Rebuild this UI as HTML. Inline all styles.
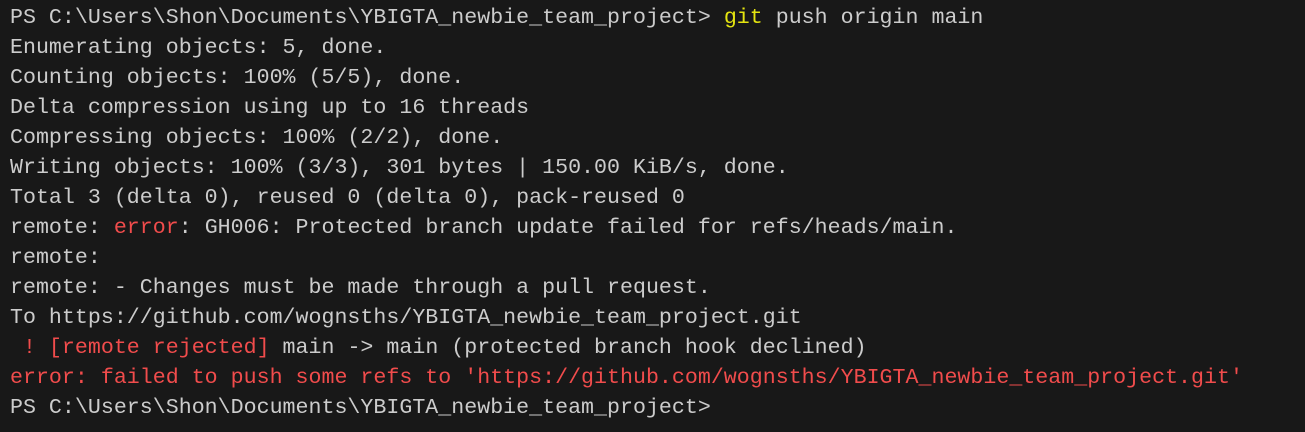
<!DOCTYPE html>
<html><head><meta charset="utf-8"><style>
html,body{margin:0;padding:0;background:#181818;width:1305px;height:432px;overflow:hidden}
pre{margin:0;padding:3px 0 0 10px;font-family:"Liberation Mono",monospace;font-size:21.6px;line-height:30px;letter-spacing:0.02px;color:#cccccc;white-space:pre}
.r{color:#f14c4c}.y{color:#e5e510}
</style></head><body><pre>PS C:\Users\Shon\Documents\YBIGTA_newbie_team_project&gt; <span class="y">git</span> push origin main
Enumerating objects: 5, done.
Counting objects: 100% (5/5), done.
Delta compression using up to 16 threads
Compressing objects: 100% (2/2), done.
Writing objects: 100% (3/3), 301 bytes | 150.00 KiB/s, done.
Total 3 (delta 0), reused 0 (delta 0), pack-reused 0
remote: <span class="r">error</span>: GH006: Protected branch update failed for refs/heads/main.
remote:
remote: - Changes must be made through a pull request.
To https://github.com/wognsths/YBIGTA_newbie_team_project.git
<span class="r"> ! [remote rejected]</span> main -&gt; main (protected branch hook declined)
<span class="r">error: failed to push some refs to 'https://github.com/wognsths/YBIGTA_newbie_team_project.git'</span>
PS C:\Users\Shon\Documents\YBIGTA_newbie_team_project&gt;</pre></body></html>
